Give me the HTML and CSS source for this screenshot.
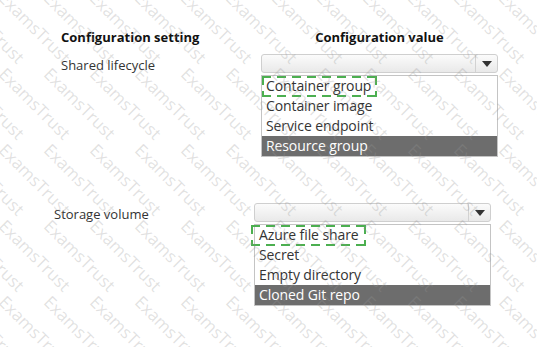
FILE: index.html
```html
<!DOCTYPE html>
<html lang="en">
<head>
  <meta charset="UTF-8" />
  <title>Configuration</title>
  <link rel="stylesheet" href="styles.css">
</head>
<body>

  <div class="sheet">
    <div class="head-row">
      <div class="head-setting">Configuration setting</div>
      <div class="head-value">Configuration value</div>
    </div>

    <div class="config-row">
      <div class="setting">Shared lifecycle</div>
      <div class="control">
        <div class="dropdown"><span class="arrow"></span></div>
        <ul class="options">
          <li><span class="answer answer-first">Container group</span></li>
          <li>Container image</li>
          <li>Service endpoint</li>
          <li class="selected">Resource group</li>
        </ul>
      </div>
    </div>

    <div class="config-row second">
      <div class="setting">Storage volume</div>
      <div class="control">
        <div class="dropdown"><span class="arrow"></span></div>
        <ul class="options">
          <li><span class="answer answer-second">Azure file share</span></li>
          <li>Secret</li>
          <li>Empty directory</li>
          <li class="selected">Cloned Git repo</li>
        </ul>
      </div>
    </div>
  </div>

  <div class="watermark">
    <div class="watermark-grid" id="watermark"></div>
  </div>

  <script>
    // fill the page with the faint diagonal watermark
    const wm = document.getElementById("watermark");
    for (let i = 0; i < 65; i++) {
      const cell = document.createElement("span");
      cell.textContent = "ExamsTrust";
      wm.appendChild(cell);
    }
  </script>

</body>
</html>
```

FILE: styles.css
```css
* {
  box-sizing: border-box;
  margin: 0;
  padding: 0;
}

html, body {
  width: 537px;
  height: 347px;
  background: #ffffff;
  overflow: hidden;
}

body {
  position: relative;
  font-family: 'Open Sans', 'Noto Sans', sans-serif;
  color: #222;
}

.sheet {
  padding: 28px 0 0 61px;
}

.head-row,
.config-row {
  display: grid;
  grid-template-columns: 200px 237px;
}

.head-setting,
.head-value {
  font-weight: 700;
  font-size: 13px;
  color: #111;
}

.head-value {
  text-align: center;
}

.config-row {
  margin-top: 8px;
}

.config-row.second {
  margin-top: 46px;
  margin-left: -7px;
}

.setting {
  font-size: 13px;
  padding-top: 2px;
  color: #333;
}

.dropdown {
  height: 19px;
  border: 1px solid #cfcfcf;
  border-radius: 3px;
  background: linear-gradient(#fbfbfb, #e9e9e9);
  display: flex;
  justify-content: flex-end;
}

.arrow {
  width: 22px;
  border-left: 1px solid #d2d2d2;
  display: flex;
  align-items: center;
  justify-content: center;
}

.arrow::after {
  content: "";
  border-left: 5px solid transparent;
  border-right: 5px solid transparent;
  border-top: 6px solid #333;
}

.options {
  list-style: none;
  margin-top: 2px;
  border: 1px solid #c4c4c4;
}

.options li {
  height: 20px;
  line-height: 20px;
  padding-left: 4px;
  font-size: 14px;
  letter-spacing: -0.1px;
  color: #333;
}

.options li.selected {
  background: #6d6d6d;
  color: #fff;
}

.answer {
  position: relative;
}

.answer::before {
  content: "";
  position: absolute;
  top: 0;
  bottom: -2px;
  left: -4px;
  right: -6px;
  background:
    repeating-linear-gradient(90deg, #4caf50 0 9px, transparent 9px 15px) top left / 100% 2px no-repeat,
    repeating-linear-gradient(90deg, #4caf50 0 9px, transparent 9px 15px) bottom left / 100% 2px no-repeat,
    repeating-linear-gradient(180deg, #4caf50 0 9px, transparent 9px 15px) top left / 2px 100% no-repeat,
    repeating-linear-gradient(180deg, #4caf50 0 9px, transparent 9px 15px) top right / 2px 100% no-repeat;
}

.answer-second::before {
  left: -8px;
  right: -7px;
}

.watermark {
  position: absolute;
  top: 0;
  left: 0;
  right: 0;
  bottom: 0;
  overflow: hidden;
  pointer-events: none;
}

.watermark-grid {
  margin: -12px 0 0 -37px;
  width: 600px;
  display: grid;
  grid-template-columns: repeat(13, 45.5px);
  grid-auto-rows: 76px;
}

.watermark span {
  display: block;
  white-space: nowrap;
  font-size: 17px;
  line-height: 20px;
  color: rgba(150, 150, 150, 0.28);
  transform: rotate(45deg);
  transform-origin: 0 0;
}
```
